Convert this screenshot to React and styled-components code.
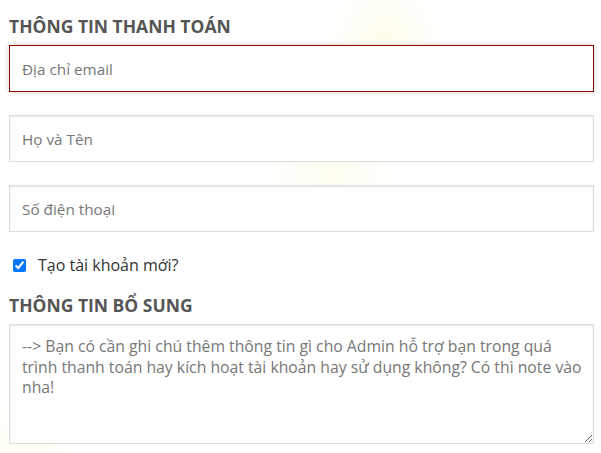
import React, { useEffect, useRef } from 'react';
import styled, { createGlobalStyle } from 'styled-components';

const GlobalStyle = createGlobalStyle`
    html, body {
        margin: 0;
        padding: 0;
        background: #fff;
    }
    body {
        font-family: "Open Sans", "Noto Sans", sans-serif;
        color: #333;
    }
    * {
        box-sizing: border-box;
    }
`;

const Page = styled.div`
    position: relative;
    width: 601px;
    height: 453px;
    overflow: hidden;
    padding: 14px 7px 0 9px;
    background:
        radial-gradient(circle at 385px 40px, rgba(255, 250, 200, 0.35) 0, rgba(255, 250, 200, 0) 60px),
        radial-gradient(circle at 330px 175px, rgba(255, 252, 215, 0.35) 0, rgba(255, 252, 215, 0) 70px),
        radial-gradient(circle at 20px 460px, rgba(255, 250, 215, 0.35) 0, rgba(255, 250, 215, 0) 60px),
        #fff;
`;

const SectionTitle = styled.h3`
    margin: 0 0 ${props => props.gap || 9}px;
    font-size: 17.5px;
    line-height: 24px;
    font-weight: 700;
    color: #555;
    text-transform: uppercase;
`;

const Field = styled.p`
    margin: 0 0 23px;
`;

const TextInput = styled.input`
    display: block;
    width: 100%;
    height: 47px;
    padding: 0 12px;
    border: 1px solid #ddd;
    border-radius: 0;
    box-shadow: inset 0 1px 2px rgba(0, 0, 0, 0.1);
    background: #fff;
    font-family: "Open Sans", "Noto Sans", sans-serif;
    font-size: 15.3px;
    color: #333;
    outline: none;

    &::placeholder {
        color: #777;
    }

    &:focus {
        border-color: #8f0000;
        box-shadow: 0 0 5px #ccc;
    }
`;

const CheckRow = styled.label`
    display: flex;
    align-items: center;
    gap: 12px;
    margin: -2px 0 16px 4px;
    font-size: 16px;
    line-height: 24px;
    color: #333;
`;

const CheckBox = styled.input`
    width: 13px;
    height: 13px;
    margin: 0;
    accent-color: #0075ff;
`;

const Notes = styled.textarea`
    display: block;
    width: 100%;
    height: 120px;
    padding: 11px 8px 11px 12px;
    border: 1px solid #ddd;
    border-radius: 0;
    box-shadow: inset 0 1px 2px rgba(0, 0, 0, 0.1);
    background: #fff;
    font-family: "Open Sans", "Noto Sans", sans-serif;
    font-size: 15.75px;
    line-height: 20.6px;
    color: #333;
    outline: none;
    resize: vertical;

    &::placeholder {
        color: #777;
    }
`;

const App = () => {
    const emailRef = useRef(null);

    useEffect(() => {
        if (emailRef.current) emailRef.current.focus();
    }, []);

    return (
        <Page>
            <GlobalStyle />
            <SectionTitle gap={7}>Thông tin thanh toán</SectionTitle>
            <Field>
                <TextInput ref={emailRef} type="email" placeholder="Địa chỉ email" />
            </Field>
            <Field>
                <TextInput type="text" placeholder="Họ và Tên" />
            </Field>
            <Field>
                <TextInput type="tel" placeholder="Số điện thoại" />
            </Field>
            <CheckRow>
                <CheckBox type="checkbox" defaultChecked />
                Tạo tài khoản mới?
            </CheckRow>
            <SectionTitle gap={7}>Thông tin bổ sung</SectionTitle>
            <Notes placeholder="--> Bạn có cần ghi chú thêm thông tin gì cho Admin hỗ trợ bạn trong quá trình thanh toán hay kích hoạt tài khoản hay sử dụng không? Có thì note vào nha!" />
        </Page>
    );
};

export default App;
